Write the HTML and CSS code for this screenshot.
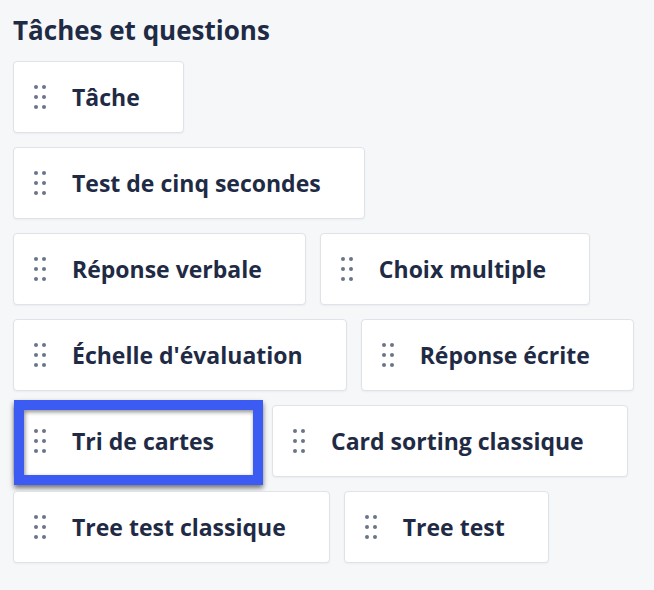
FILE: index.html
```html
<!DOCTYPE html>
<html lang="fr">
<head>
<meta charset="utf-8">
<link rel="stylesheet" href="styles.css">
</head>
<body>
<div class="panel">
  <h2 class="title">Tâches et questions</h2>
  <div class="list">
    <div class="row">
      <div class="card"><span class="grip"><i></i><i></i><i></i><i></i><i></i><i></i></span><span class="label">Tâche</span></div>
    </div>
    <div class="row">
      <div class="card"><span class="grip"><i></i><i></i><i></i><i></i><i></i><i></i></span><span class="label">Test de cinq secondes</span></div>
    </div>
    <div class="row">
      <div class="card"><span class="grip"><i></i><i></i><i></i><i></i><i></i><i></i></span><span class="label">Réponse verbale</span></div>
      <div class="card"><span class="grip"><i></i><i></i><i></i><i></i><i></i><i></i></span><span class="label">Choix multiple</span></div>
    </div>
    <div class="row">
      <div class="card"><span class="grip"><i></i><i></i><i></i><i></i><i></i><i></i></span><span class="label">Échelle d'évaluation</span></div>
      <div class="card"><span class="grip"><i></i><i></i><i></i><i></i><i></i><i></i></span><span class="label">Réponse écrite</span></div>
    </div>
    <div class="row">
      <div class="card card-selected"><span class="grip"><i></i><i></i><i></i><i></i><i></i><i></i></span><span class="label">Tri de cartes</span></div>
      <div class="card"><span class="grip"><i></i><i></i><i></i><i></i><i></i><i></i></span><span class="label">Card sorting classique</span></div>
    </div>
    <div class="row">
      <div class="card"><span class="grip"><i></i><i></i><i></i><i></i><i></i><i></i></span><span class="label">Tree test classique</span></div>
      <div class="card"><span class="grip"><i></i><i></i><i></i><i></i><i></i><i></i></span><span class="label">Tree test</span></div>
    </div>
  </div>
</div>
</body>
</html>
```
FILE: styles.css
```css
html, body {
  margin: 0;
  padding: 0;
  background: #f6f7f9;
}
body {
  width: 654px;
  height: 590px;
  overflow: hidden;
  font-family: "Open Sans", "Liberation Sans", sans-serif;
  color: #1f2b45;
}
.panel {
  padding: 12px 13px 0 13px;
}
.title {
  margin: 0 0 12px 0;
  font-size: 26px;
  line-height: 37px;
  font-weight: 700;
  color: #1f2b45;
}
.list {
  display: flex;
  flex-direction: column;
  gap: 14px;
}
.row {
  display: flex;
  gap: 14px;
}
.card {
  position: relative;
  box-sizing: border-box;
  height: 72px;
  display: flex;
  align-items: center;
  padding: 0 43px 0 20px;
  background: #ffffff;
  border: 1px solid #dfe2e7;
  border-radius: 4px;
  box-shadow: 0 1px 2px rgba(20, 30, 50, 0.05);
}
.grip {
  display: grid;
  grid-template-columns: 4px 4px;
  grid-auto-rows: 4px;
  column-gap: 4px;
  row-gap: 6px;
  width: 12px;
  margin-right: 26px;
}
.grip i {
  display: block;
  width: 4px;
  height: 4px;
  border-radius: 50%;
  background: #6b7588;
}
.label {
  font-size: 23px;
  font-weight: 700;
  white-space: nowrap;
  color: #1f2b45;
}
.card-selected::after {
  content: "";
  position: absolute;
  left: 0;
  top: -6px;
  width: 249px;
  height: 85px;
  box-sizing: border-box;
  border: 10px solid #3b5bf2;
  box-shadow: 0 3px 5px rgba(0, 0, 0, 0.55), inset 1px 2px 4px rgba(0, 0, 0, 0.45);
  pointer-events: none;
}
```
